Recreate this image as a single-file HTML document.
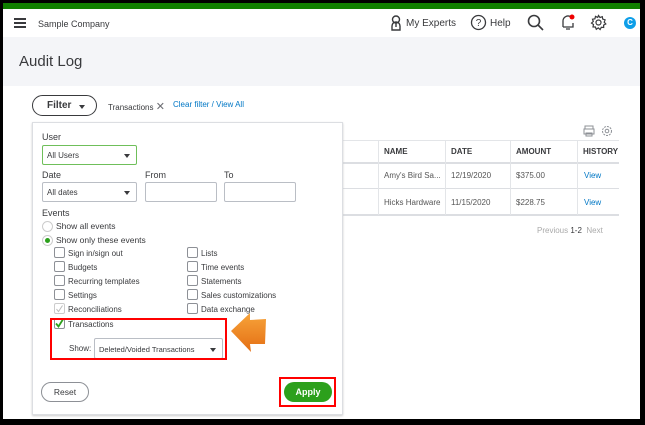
<!DOCTYPE html>
<html><head><meta charset="utf-8"><style>
*{margin:0;padding:0;box-sizing:border-box}
body{width:645px;height:425px;background:#fff;font-family:"Liberation Sans",sans-serif;position:relative;overflow:hidden;color:#393a3d}
.a{position:absolute;white-space:nowrap}
.t{font-size:8px;color:#393a3d}
.cb{position:absolute;width:11px;height:11px;border:1px solid #8d9096;border-radius:2px;background:#fff}
.in{position:absolute;height:20px;border:1px solid #babec5;border-radius:2px;background:#fff}
.tri{position:absolute;width:0;height:0;border-left:3px solid transparent;border-right:3px solid transparent;border-top:4px solid #393a3d}
</style></head><body>
<div class="a" style="left:0;top:0;width:645px;height:425px;border:3px solid #000;border-bottom-width:6px;border-right-width:5px"></div>
<div class="a" style="left:3px;top:3px;width:637px;height:6px;background:#108000"></div>
<div class="a" style="left:14px;top:18px;width:12px;height:2px;background:#393a3d;box-shadow:0 4px 0 #393a3d,0 8px 0 #393a3d"></div>
<div class="a t" style="left:38px;top:19px;font-size:9px">Sample Company</div>
<svg class="a" style="left:389px;top:15px" width="14" height="16" viewBox="0 0 14 16" fill="none" stroke="#393a3d" stroke-width="1.4"><circle cx="7" cy="4.5" r="3.5"/><path d="M3 15V11a4 4 0 0 1 8 0v4z"/><path d="M7 8v4"/></svg>
<div class="a" style="left:406px;top:18px;font-size:10px">My Experts</div>
<svg class="a" style="left:470px;top:14px" width="17" height="17"><circle cx="8.5" cy="8.5" r="7" fill="none" stroke="#393a3d" stroke-width="1.3"/><text x="8.5" y="12" font-size="10" text-anchor="middle" fill="#393a3d" font-family="Liberation Sans">?</text></svg>
<div class="a" style="left:490px;top:18px;font-size:10px">Help</div>
<svg class="a" style="left:527px;top:14px" width="17" height="17" fill="none" stroke="#393a3d" stroke-width="1.6"><circle cx="7" cy="7" r="5.5"/><path d="M11 11l5 5"/></svg>
<svg class="a" style="left:560px;top:13px" width="16" height="18" fill="none" stroke="#393a3d" stroke-width="1.3"><path d="M3 14V8a5 5 0 0 1 8-4M3 14h10v-4M6 16h4"/><circle cx="12" cy="4" r="2.5" fill="#e00" stroke="none"/></svg>
<svg class="a" style="left:590px;top:14px" width="17" height="17" fill="none" stroke="#393a3d" stroke-width="1.2"><circle cx="8.5" cy="8.5" r="2.5"/><path d="M8.5 1.5l1.5 2 2.3-.8.4 2.4 2.4.8-.9 2.3 1.6 1.8-2.2 1.1.1 2.4-2.4-.2-1.2 2.2-1.8-1.6-2 1.4-.9-2.3-2.4-.1.5-2.4-2-1.4 1.8-1.6-.8-2.3 2.4-.4.6-2.4 2.2 1z"/></svg>
<div class="a" style="left:624px;top:17px;width:12px;height:12px;border-radius:50%;background:#0d9ee8;color:#fff;font-size:8px;font-weight:bold;text-align:center;line-height:12px">C</div>
<div class="a" style="left:3px;top:37px;width:637px;height:49px;background:#f4f5f8"></div>
<div class="a" style="left:19px;top:53px;font-size:15px;color:#393a3d">Audit Log</div>
<div class="a" style="left:32px;top:95px;width:65px;height:21px;border:1.5px solid #393a3d;border-radius:11px"></div>
<div class="a" style="left:47px;top:100px;font-size:10px;font-weight:bold">Filter</div>
<div class="tri" style="left:79px;top:105px"></div>
<div class="a t" style="left:108px;top:100px;font-size:8px">Transactions <span style="font-size:11px;color:#6b6c72">✕</span></div>
<div class="a" style="left:173px;top:100px;font-size:8px;color:#0077c5">Clear filter / View All</div>
<svg class="a" style="left:583px;top:125px" width="12" height="12" fill="none" stroke="#8d9096"><rect x="2" y="1" width="8" height="3"/><rect x="1" y="4" width="10" height="5"/><rect x="3" y="8" width="6" height="3"/></svg>
<svg class="a" style="left:601px;top:125px" width="12" height="12" fill="none" stroke="#8d9096"><circle cx="6" cy="6" r="4.5" stroke-dasharray="2 1"/><circle cx="6" cy="6" r="1.8"/></svg>
<div class="a" style="left:342px;top:140px;width:277px;height:1px;background:#e3e5e8"></div>
<div class="a" style="left:342px;top:162px;width:277px;height:2px;background:#dcdee2"></div>
<div class="a" style="left:342px;top:188px;width:277px;height:1px;background:#dcdee2"></div>
<div class="a" style="left:342px;top:214px;width:277px;height:2px;background:#dcdee2"></div>
<div class="a" style="left:378px;top:141px;width:1px;height:74px;background:#e3e5e8"></div>
<div class="a" style="left:445px;top:141px;width:1px;height:74px;background:#e3e5e8"></div>
<div class="a" style="left:510px;top:141px;width:1px;height:74px;background:#e3e5e8"></div>
<div class="a" style="left:577px;top:141px;width:1px;height:74px;background:#e3e5e8"></div>
<div class="a" style="left:384px;top:147px;font-size:8px;font-weight:bold">NAME</div>
<div class="a" style="left:451px;top:147px;font-size:8px;font-weight:bold">DATE</div>
<div class="a" style="left:516px;top:147px;font-size:8px;font-weight:bold">AMOUNT</div>
<div class="a" style="left:583px;top:147px;font-size:8px;font-weight:bold">HISTORY</div>
<div class="a t" style="left:384px;top:171px;color:#555">Amy's Bird Sa...</div>
<div class="a t" style="left:451px;top:171px;color:#555">12/19/2020</div>
<div class="a t" style="left:516px;top:171px;color:#555">$375.00</div>
<div class="a t" style="left:584px;top:171px;color:#0077c5">View</div>
<div class="a t" style="left:384px;top:198px;color:#555">Hicks Hardware</div>
<div class="a t" style="left:451px;top:198px;color:#555">11/15/2020</div>
<div class="a t" style="left:516px;top:198px;color:#555">$228.75</div>
<div class="a t" style="left:584px;top:198px;color:#0077c5">View</div>
<div class="a t" style="left:537px;top:226px;color:#aaa">Previous <span style="color:#393a3d">1-2</span> &nbsp;Next</div>
<div class="a" style="left:32px;top:122px;width:311px;height:293px;background:#fff;border:1px solid #dcdee2;box-shadow:0 1px 2px #ccc"></div>
<div class="a" style="left:42px;top:132px;font-size:9px">User</div>
<div class="in" style="left:42px;top:145px;width:95px;border-color:#6fbf5a"></div>
<div class="a t" style="left:47px;top:151px">All Users</div><div class="tri" style="left:124px;top:154px"></div>
<div class="a" style="left:42px;top:170px;font-size:9px">Date</div>
<div class="a" style="left:145px;top:170px;font-size:9px">From</div>
<div class="a" style="left:224px;top:170px;font-size:9px">To</div>
<div class="in" style="left:42px;top:182px;width:95px"></div>
<div class="a t" style="left:47px;top:188px">All dates</div><div class="tri" style="left:124px;top:191px"></div>
<div class="in" style="left:145px;top:182px;width:72px"></div>
<div class="in" style="left:224px;top:182px;width:72px"></div>
<div class="a" style="left:42px;top:208px;font-size:9px">Events</div>
<div class="a" style="left:42px;top:221px;width:11px;height:11px;border:1px solid #ccc;border-radius:50%"></div>
<div class="a t" style="left:56px;top:221px;font-size:8.5px">Show all events</div>
<div class="a" style="left:42px;top:235px;width:11px;height:11px;border:1px solid #ccc;border-radius:50%"></div>
<div class="a" style="left:45px;top:238px;width:5px;height:5px;border-radius:50%;background:#2ca01c"></div>
<div class="a t" style="left:56px;top:235px;font-size:8.5px">Show only these events</div>
<div class="cb" style="left:54px;top:247px"></div><div class="a t" style="left:68px;top:249px">Sign in/sign out</div>
<div class="cb" style="left:54px;top:261px"></div><div class="a t" style="left:68px;top:263px">Budgets</div>
<div class="cb" style="left:54px;top:275px"></div><div class="a t" style="left:68px;top:277px">Recurring templates</div>
<div class="cb" style="left:54px;top:289px"></div><div class="a t" style="left:68px;top:291px">Settings</div>
<div class="cb" style="left:54px;top:303px;border-color:#ccc"></div>
<svg class="a" style="left:54px;top:303px" width="11" height="11" fill="none" stroke="#bbb" stroke-width="1"><path d="M2.5 6l2 2.5 4-6"/></svg>
<div class="a t" style="left:68px;top:305px">Reconciliations</div>
<div class="cb" style="left:187px;top:247px"></div><div class="a t" style="left:201px;top:249px">Lists</div>
<div class="cb" style="left:187px;top:261px"></div><div class="a t" style="left:201px;top:263px">Time events</div>
<div class="cb" style="left:187px;top:275px"></div><div class="a t" style="left:201px;top:277px">Statements</div>
<div class="cb" style="left:187px;top:289px"></div><div class="a t" style="left:201px;top:291px">Sales customizations</div>
<div class="cb" style="left:187px;top:303px"></div><div class="a t" style="left:201px;top:305px">Data exchange</div>
<div class="cb" style="left:54px;top:318px"></div>
<svg class="a" style="left:54px;top:316px" width="12" height="13" fill="none" stroke="#2ca01c" stroke-width="1.8"><path d="M2 7.5l2.5 3 5-8"/></svg>
<div class="a t" style="left:68px;top:320px">Transactions</div>
<div class="a t" style="left:69px;top:344px">Show:</div>
<div class="in" style="left:94px;top:338px;width:129px;height:21px"></div>
<div class="a t" style="left:99px;top:345px;font-size:7.5px">Deleted/Voided Transactions</div><div class="tri" style="left:210px;top:348px"></div>
<div class="a" style="left:50px;top:318px;width:177px;height:42px;border:2.5px solid #f00"></div>
<svg class="a" style="left:228px;top:310px" width="42" height="46"><defs><linearGradient id="g" x1="0" y1="0" x2="0" y2="1"><stop offset="0" stop-color="#f7a43a"/><stop offset="1" stop-color="#e46e14"/></linearGradient></defs><polygon points="3,21 22,3 22,10 38,9 37,34 22,34 23,42" fill="url(#g)"/></svg>
<div class="a" style="left:41px;top:382px;width:48px;height:20px;border:1px solid #8d9096;border-radius:10px;font-size:8.5px;text-align:center;line-height:18px">Reset</div>
<div class="a" style="left:279px;top:377px;width:57px;height:30px;border:2.5px solid #f00"></div>
<div class="a" style="left:284px;top:382px;width:48px;height:20px;background:#2ca01c;border-radius:10px;color:#fff;font-size:9px;font-weight:bold;text-align:center;line-height:20px">Apply</div>
</body></html>
